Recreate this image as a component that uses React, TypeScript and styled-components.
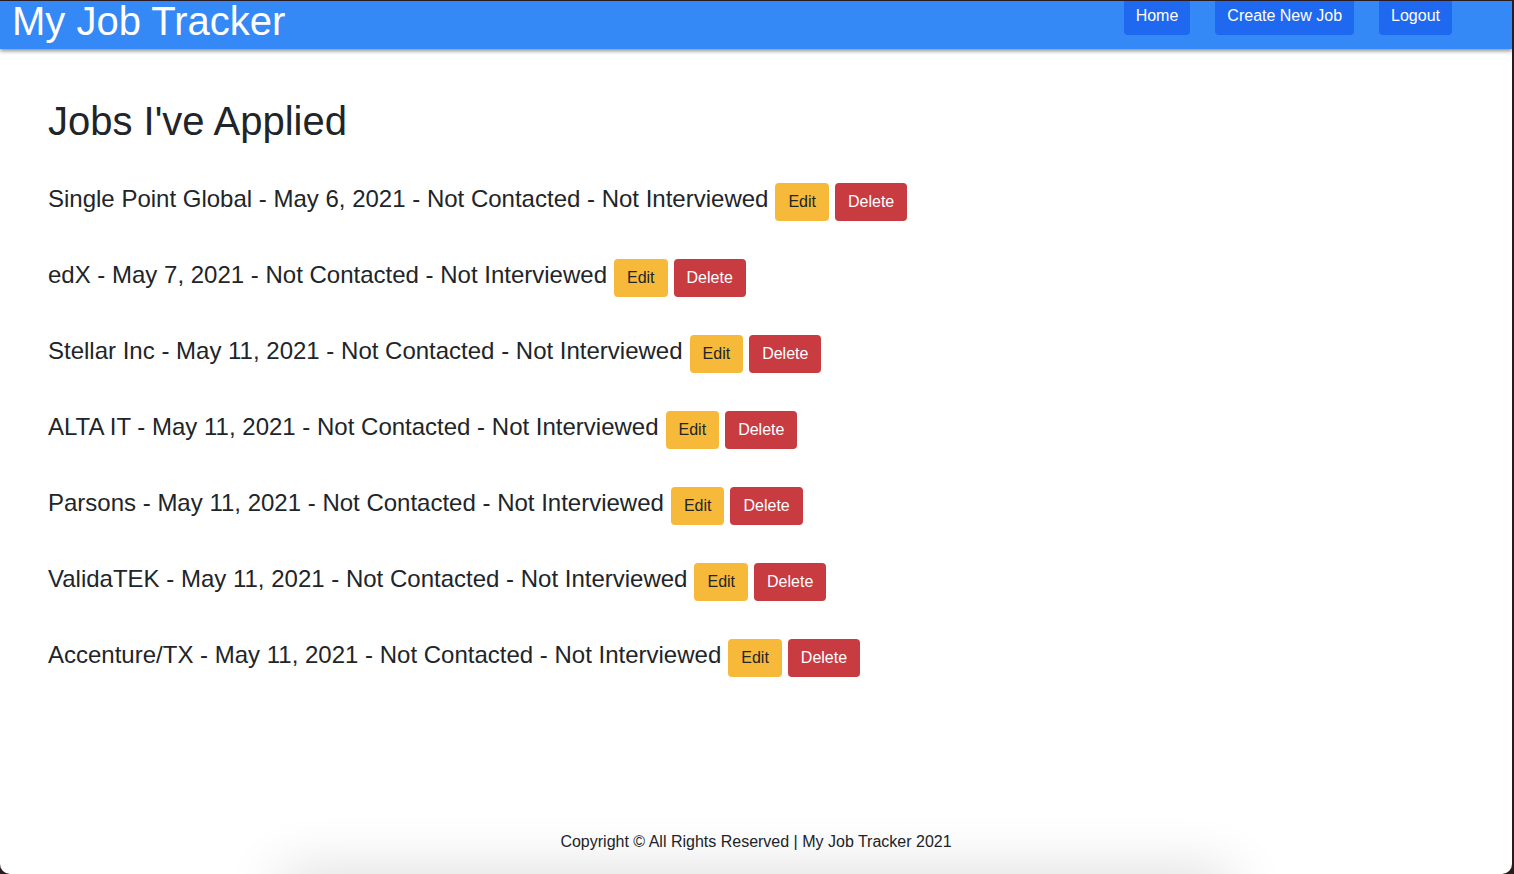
import React from 'react';
import styled, { createGlobalStyle } from 'styled-components';

const GlobalStyle = createGlobalStyle`
  * {
    box-sizing: border-box;
  }
  html, body {
    margin: 0;
    padding: 0;
    height: 100%;
    overflow: hidden;
    background: #2a1c1e;
  }
  body {
    font-family: 'Liberation Sans', Arial, Helvetica, sans-serif;
    color: #212529;
  }
`;

const Frame = styled.div`
  height: 873px;
  margin: 1px 2px 0 0;
  background: #ffffff;
  border-radius: 0 0 10px 10px;
  overflow: hidden;
  display: flex;
  flex-direction: column;
`;

const Header = styled.header`
  height: 48px;
  flex-shrink: 0;
  display: flex;
  justify-content: space-between;
  align-items: flex-start;
  padding: 0 60px 0 12px;
  background: #3589f6;
  box-shadow: 0 2px 4px rgba(0, 0, 0, 0.45);
  position: relative;
  z-index: 1;
`;

const Brand = styled.h1`
  margin: 0;
  font-size: 40px;
  line-height: 40px;
  font-weight: 400;
  color: #ffffff;
`;

const Nav = styled.nav`
  display: flex;
  gap: 25px;
`;

const NavButton = styled.a`
  display: block;
  height: 34px;
  padding: 3px 12px 7px;
  font-size: 16px;
  line-height: 24px;
  color: #ffffff;
  background: #1f68f0;
  border-radius: 0 0 4px 4px;
  text-decoration: none;
  cursor: pointer;
`;

const Main = styled.main`
  flex: 1;
  padding: 48px 48px 0;
`;

const Title = styled.h2`
  margin: 0;
  font-size: 40px;
  line-height: 48px;
  font-weight: 400;
`;

const JobList = styled.ul`
  list-style: none;
  margin: 38px 0 0;
  padding: 0;
  display: flex;
  flex-direction: column;
  gap: 38px;
`;

const JobRow = styled.li`
  display: flex;
  align-items: baseline;
`;

const JobText = styled.span`
  font-size: 24px;
  line-height: 1.2;
  margin-right: 7px;
`;

const ActionButton = styled.button<{ $variant: 'edit' | 'delete' }>`
  font-family: inherit;
  font-size: 16px;
  line-height: 24px;
  padding: 6px 12px;
  border: 1px solid transparent;
  border-radius: 4px;
  cursor: pointer;
  margin-right: 6px;
  background: ${(p) => (p.$variant === 'edit' ? '#f7b93a' : '#c83b41')};
  color: ${(p) => (p.$variant === 'edit' ? '#212529' : '#ffffff')};
`;

const Footer = styled.footer`
  flex-shrink: 0;
  display: flex;
  flex-direction: column;
  align-items: center;
  padding-bottom: 20px;
  font-size: 16px;
  line-height: 24px;
  color: #212529;
`;

// sits just below the visible window; only its shadow shows
const FooterShade = styled.div`
  flex-shrink: 0;
  width: 900px;
  height: 0;
  margin: 24px auto -24px;
  box-shadow: 0 0 60px 24px rgba(0, 0, 0, 0.16);
`;

type Job = {
  company: string;
  date: string;
  contacted: boolean;
  interviewed: boolean;
};

const jobs: Job[] = [
  { company: 'Single Point Global', date: 'May 6, 2021', contacted: false, interviewed: false },
  { company: 'edX', date: 'May 7, 2021', contacted: false, interviewed: false },
  { company: 'Stellar Inc', date: 'May 11, 2021', contacted: false, interviewed: false },
  { company: 'ALTA IT', date: 'May 11, 2021', contacted: false, interviewed: false },
  { company: 'Parsons', date: 'May 11, 2021', contacted: false, interviewed: false },
  { company: 'ValidaTEK', date: 'May 11, 2021', contacted: false, interviewed: false },
  { company: 'Accenture/TX', date: 'May 11, 2021', contacted: false, interviewed: false },
];

const App: React.FC = () => {
  return (
    <>
      <GlobalStyle />
      <Frame>
        <Header>
          <Brand>My Job Tracker</Brand>
          <Nav>
            <NavButton>Home</NavButton>
            <NavButton>Create New Job</NavButton>
            <NavButton>Logout</NavButton>
          </Nav>
        </Header>
        <Main>
          <Title>Jobs I've Applied</Title>
          <JobList>
            {jobs.map((job) => (
              <JobRow key={job.company}>
                <JobText>
                  {job.company} - {job.date} -{' '}
                  {job.contacted ? 'Contacted' : 'Not Contacted'} -{' '}
                  {job.interviewed ? 'Interviewed' : 'Not Interviewed'}
                </JobText>
                <ActionButton $variant='edit'>Edit</ActionButton>
                <ActionButton $variant='delete'>Delete</ActionButton>
              </JobRow>
            ))}
          </JobList>
        </Main>
        <Footer>Copyright © All Rights Reserved | My Job Tracker 2021</Footer>
        <FooterShade />
      </Frame>
    </>
  );
};

export default App;
